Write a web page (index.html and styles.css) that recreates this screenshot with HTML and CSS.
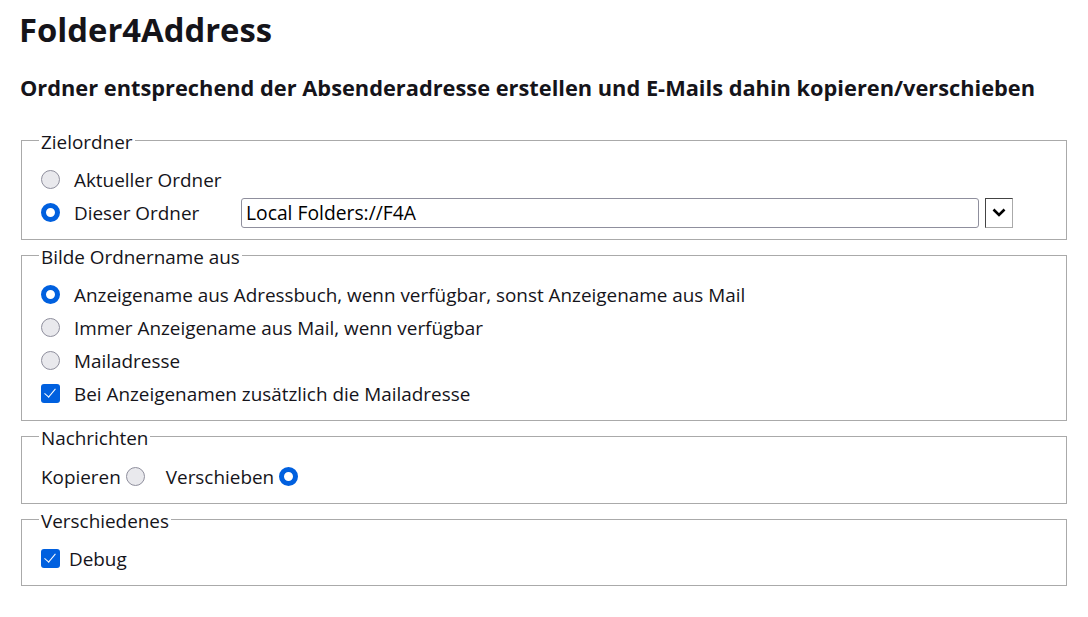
FILE: index.html
```html
<!DOCTYPE html>
<html>
<head>
	<meta charset="utf8">
	<title>Folder4Address</title>
	<link rel="stylesheet" href="styles.css">
</head>
<body>
	<h1>Folder4Address</h1>
	<h2>Ordner entsprechend der Absenderadresse erstellen und E-Mails dahin kopieren/verschieben</h2>

	<fieldset>
		<legend>Zielordner</legend>
		<div class="ziel">
			<label class="option"><input type="radio" name="ziel" class="radio">Aktueller Ordner</label>
			<span></span>
			<span></span>
			<label class="option"><input type="radio" name="ziel" class="radio" checked>Dieser Ordner</label>
			<input type="text" class="pfad" value="Local Folders://F4A">
			<button class="auswahl" type="button">
				<svg width="14" height="9" viewBox="0 0 14 9"><polyline points="1.5,1.5 7,7 12.5,1.5" fill="none" stroke="#000" stroke-width="2.6"/></svg>
			</button>
		</div>
	</fieldset>

	<fieldset>
		<legend>Bilde Ordnername aus</legend>
		<label class="option"><input type="radio" name="name" class="radio" checked>Anzeigename aus Adressbuch, wenn verfügbar, sonst Anzeigename aus Mail</label>
		<label class="option"><input type="radio" name="name" class="radio">Immer Anzeigename aus Mail, wenn verfügbar</label>
		<label class="option"><input type="radio" name="name" class="radio">Mailadresse</label>
		<label class="option"><input type="checkbox" class="check" checked>Bei Anzeigenamen zusätzlich die Mailadresse</label>
	</fieldset>

	<fieldset>
		<legend>Nachrichten</legend>
		<div class="option nachrichten">
			<label class="nach">Kopieren<input type="radio" name="aktion" class="radio"></label>
			<label class="nach">Verschieben<input type="radio" name="aktion" class="radio" checked></label>
		</div>
	</fieldset>

	<fieldset>
		<legend>Verschiedenes</legend>
		<label class="option debug"><input type="checkbox" class="check" checked>Debug</label>
	</fieldset>
</body>
</html>
```
FILE: styles.css
```css
body{
	margin: 0;
	padding: 0 21px;
	font-family: "Open Sans", sans-serif;
	font-size: 18.9px;
	color: #15141a;
}
h1{
	font-size: 32.8px;
	line-height: 40px;
	margin: 10px 0 24px -2px;
}
h2{
	font-size: 21.8px;
	line-height: 28px;
	margin: 0 0 24px -1px;
}
fieldset{
	margin: 0 0 1px 0;
	padding: 9px 19px 10px;
	border: 1px solid #aaa;
}
legend{
	padding: 4px 2px 0;
	margin-left: -2px;
	line-height: 24px;
}
.option{
	display: flex;
	align-items: center;
	height: 33px;
}
.ziel{
	display: grid;
	grid-template-columns: 194px 738px 28px;
	grid-auto-rows: 33px;
	column-gap: 6px;
	align-items: center;
}
.radio, .check{
	appearance: none;
	-webkit-appearance: none;
	box-sizing: border-box;
	width: 19px;
	height: 19px;
	margin: 0 14px 0 0;
	flex: none;
}
.radio{
	border-radius: 50%;
	border: 1px solid #8f8f9d;
	background-color: #e9e9ed;
}
.radio:checked{
	border: 5px solid #0060df;
	background-color: #fff;
}
.check{
	position: relative;
	border-radius: 3px;
	background-color: #0060df;
}
.check::before{
	content: "";
	position: absolute;
	left: 6px;
	top: 2px;
	width: 5px;
	height: 10px;
	border-right: 1.5px solid #fff;
	border-bottom: 1.5px solid #fff;
	transform: rotate(40deg);
}
.pfad{
	box-sizing: border-box;
	height: 30px;
	width: 100%;
	padding: 0 4px;
	font-family: "Open Sans", sans-serif;
	font-size: 19.3px;
	color: #000;
	border: 1px solid #8f8f9d;
	border-radius: 3px;
}
.auswahl{
	box-sizing: border-box;
	height: 30px;
	width: 28px;
	padding: 0;
	display: flex;
	align-items: center;
	justify-content: center;
	background-color: #fff;
	border: 1px solid;
	border-color: #444 #aaa #aaa #444;
	border-radius: 0;
}
.nachrichten{
	margin-top: 1px;
}
.nach{
	display: flex;
	align-items: center;
	margin-right: 21px;
}
.nach .radio{
	margin: 0 0 0 5px;
}
.debug .check{
	margin-right: 9px;
}
```
